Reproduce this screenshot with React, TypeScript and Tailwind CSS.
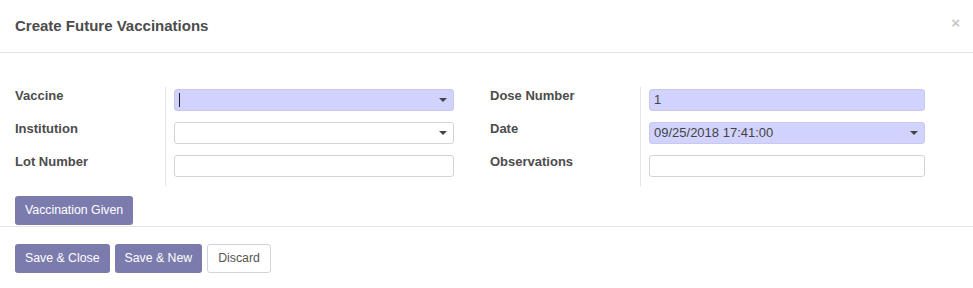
import { ReactNode } from "react";

const font = { fontFamily: '"Liberation Sans", Arial, sans-serif' };

function Caret() {
  return (
    <span className="absolute right-[6px] top-1/2 -translate-y-1/2 border-x-[4px] border-t-[4px] border-x-transparent border-t-[#444]" />
  );
}

interface FieldProps {
  value?: string;
  highlight?: boolean;
  select?: boolean;
  cursor?: boolean;
  width: string;
}

function Field({ value, highlight, select, cursor, width }: FieldProps) {
  return (
    <div
      className={`relative h-[22px] rounded-[3px] border ${width} ${
        highlight ? "bg-[#d2d2ff] border-[#c8c8f0]" : "bg-white border-[#d4d4d4]"
      } flex items-center px-[4px] text-[13px] text-[#444]`}
    >
      {cursor && <span className="h-[14px] w-px bg-[#222]" />}
      {value}
      {select && <Caret />}
    </div>
  );
}

function Row({ label, children }: { label: string; children: ReactNode }) {
  return (
    <div className="flex h-[33px]">
      <div className="w-[151px] border-r border-[#e4e4e4] pt-[1px] text-[13px] leading-[16px] font-bold text-[#4c4c4c]">
        {label}
      </div>
      <div className="pl-[8px] pt-[2px]">{children}</div>
    </div>
  );
}

function Btn({ children, light }: { children: ReactNode; light?: boolean }) {
  return (
    <button
      className={`h-[29px] rounded-[3px] px-[10px] text-[12.3px] ${
        light
          ? "border border-[#d4d4d4] bg-white text-[#555]"
          : "bg-[#7c7bad] text-white"
      }`}
    >
      {children}
    </button>
  );
}

export default function App() {
  return (
    <div className="w-[973px] h-[288px] bg-white" style={font}>
      <div className="relative h-[53px] border-b border-[#e5e5e5] px-[15px] pt-[15px]">
        <h4 className="text-[15px] font-bold text-[#4c4c4c]">Create Future Vaccinations</h4>
        <span className="absolute right-[13px] top-[12px] text-[15px] font-bold text-[#c8c8c8]">×</span>
      </div>
      <div className="px-[15px] pt-[34px]">
        <div className="flex">
          <div className="w-[475px]">
            <Row label="Vaccine">
              <Field width="w-[280px]" highlight select cursor />
            </Row>
            <Row label="Institution">
              <Field width="w-[280px]" select />
            </Row>
            <Row label="Lot Number">
              <Field width="w-[280px]" />
            </Row>
          </div>
          <div>
            <Row label="Dose Number">
              <Field width="w-[276px]" highlight value="1" />
            </Row>
            <Row label="Date">
              <Field width="w-[276px]" highlight select value="09/25/2018 17:41:00" />
            </Row>
            <Row label="Observations">
              <Field width="w-[276px]" />
            </Row>
          </div>
        </div>
        <div className="pt-[10px] pb-[1px]">
          <Btn>Vaccination Given</Btn>
        </div>
      </div>
      <div className="flex gap-[5px] border-t border-[#e5e5e5] px-[15px] pt-[17px]">
        <Btn>Save &amp; Close</Btn>
        <Btn>Save &amp; New</Btn>
        <Btn light>Discard</Btn>
      </div>
    </div>
  );
}
